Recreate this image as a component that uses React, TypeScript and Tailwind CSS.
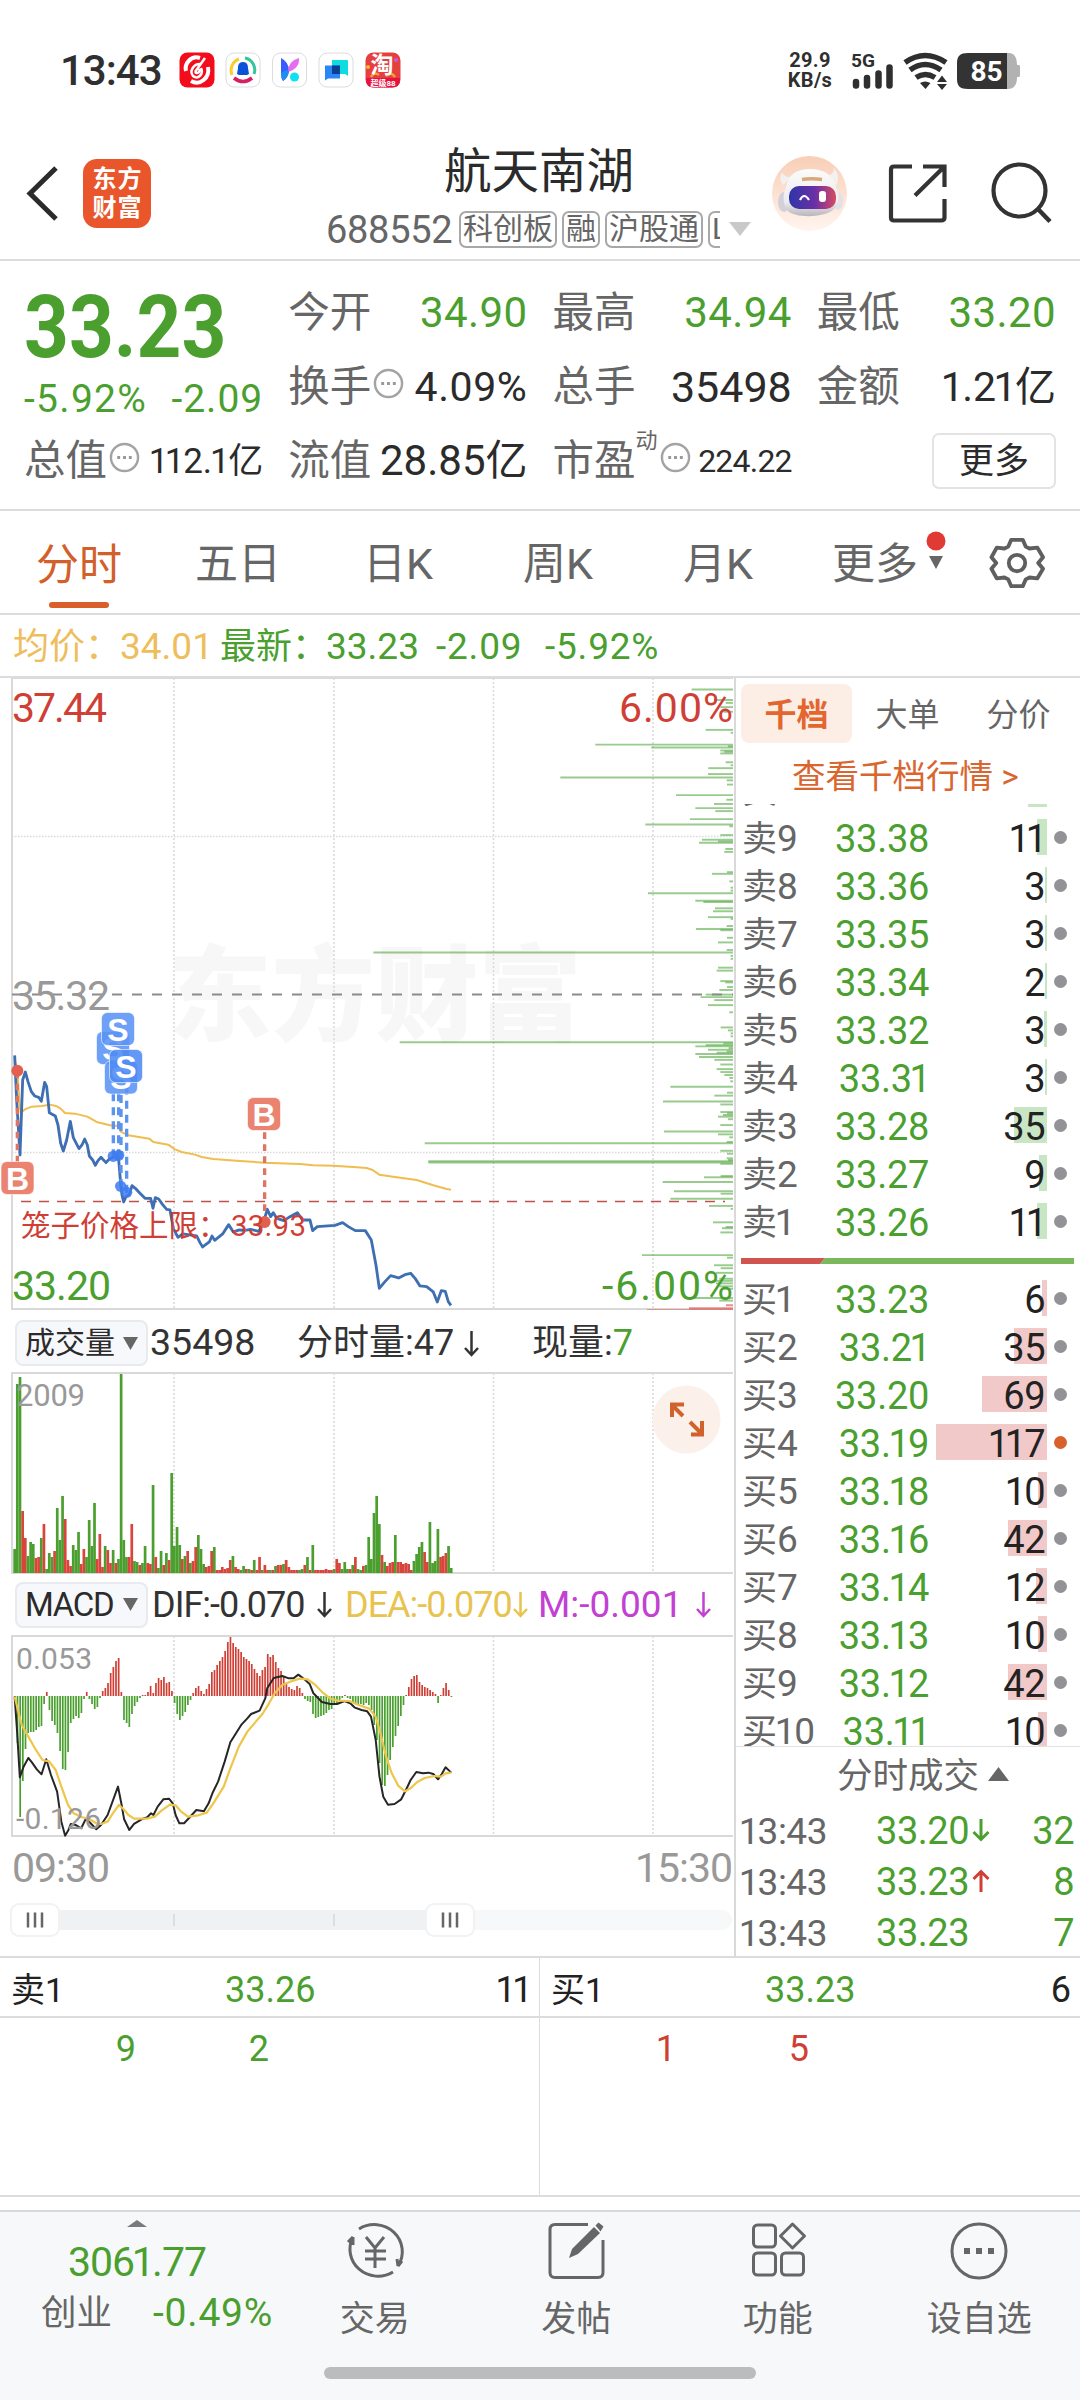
import React from "react";

const GREEN = "#4a9f2f";
const RED = "#cf3f36";

// minute volume, negative = falling minute
const volumes = [
  -24, -189, -196, 62, 35, -17, -31, -29, 15, 16, -35, 49, -4, -20, -16, 22, -65, -33, -77, 54, 13, 7, -28, -23, -41,
  9, 24, -16, -53, -27, -70, 14, 39, 6, -27, 23, 10, -23, 10, -14, -199, -33, -16, 16, 49, -12, -11, 8, -10, -27, 10,
  9, -88, 16, -5, -22, 8, -20, 13, -100, -27, -46, -28, 14, -17, 22, -10, 12, 26, -38, -24, -9, 6, 7, 22, -26, 3, 3,
  6, 4, 5, 13, -17, 6, 4, -3, -7, 4, -4, 3, -13, 3, 16, -3, 8, 3, -3, 3, -7, 8, 8, -9, 13, 6, 3, 3, 3, -3, -4, 8,
  -16, 3, -28, 3, 3, 3, 3, 4, 3, 3, -4, 14, 10, -4, -11, -4, 4, -8, 16, -4, -3, 7, -8, -36, -14, -60, -77, -49, 18,
  -11, 7, 10, 11, -38, 11, 11, 9, 10, 9, 3, -12, -19, -26, -31, 21, 11, -51, -10, -12, -44, 16, 17, 20, -27, -5,
];

const macd = [
  -2, -47, -121, -85, -53, -37, -36, -36, -34, -31, -30, -8, 4, -14, -25, -29, -37, -55, -73, -74, -56, -27, -23, -20,
  -22, -17, -3, 4, -3, -8, -13, -11, -2, 5, 8, 13, 23, 29, 35, 38, 4, -24, -27, -31, -18, -10, -6, -2, 1, 1, 4, 10, 3,
  13, 18, 16, 19, 13, 14, 5, -7, -18, -24, -20, -16, -9, -4, 3, 8, 10, 5, 2, 7, 12, 24, 26, 31, 35, 39, 45, 54, 59,
  53, 49, 47, 44, 39, 37, 35, 32, 27, 23, 20, 26, 29, 42, 39, 41, 34, 28, 25, 19, 13, 9, 7, 6, 10, 8, 3, -3, -5, -6,
  -18, -22, -21, -20, -19, -17, -14, -13, -8, -7, -5, -2, 1, -2, -3, -6, -7, -9, -8, -9, -7, -9, -14, -29, -44, -67,
  -89, -90, -79, -64, -51, -40, -30, -20, -9, 1, 9, 17, 20, 21, 14, 11, 9, 8, 6, 4, 2, -7, 1, 8, 13, 6, -1,
];

// resting orders: [left edge, y] in the depth layer's own units
const depth = [
  [695, 70], [762, 95], [797, 102], [781, 112], [790, 123], [737, 166], [812, 173], [406, 201], [574, 208], [804, 205],
  [781, 215], [793, 218], [781, 222], [797, 243], [812, 250], [745, 257], [744, 271], [301, 279], [800, 286],
  [801, 296], [648, 321], [799, 332], [762, 342], [706, 352], [766, 359], [690, 378], [556, 391], [808, 395],
  [781, 416], [726, 427], [774, 431], [717, 434], [796, 449], [793, 456], [801, 504], [756, 508], [808, 526],
  [812, 541], [812, 548], [564, 554], [706, 572], [730, 575], [765, 590], [759, 597], [744, 611], [812, 615],
  [800, 632], [708, 639], [781, 642], [801, 660], [774, 671], [800, 689], [-260, 695], [812, 703], [812, 710],
  [774, 731], [770, 738], [781, 763], [796, 766], [801, 777], [778, 784], [737, 795], [722, 801], [763, 808],
  [744, 820], [808, 837], [782, 873], [804, 880], [812, 887], [812, 894], [-181, 908], [790, 911], [737, 915],
  [706, 918], [806, 922], [744, 926], [800, 930], [770, 933], [706, 936], [717, 943], [763, 950], [781, 961],
  [770, 972], [781, 979], [793, 986], [808, 993], [811, 1001], [631, 1014], [801, 1028], [763, 1035], [609, 1049],
  [781, 1056], [781, 1074], [801, 1077], [789, 1081], [774, 1085], [804, 1091], [781, 1105], [612, 1120],
  [774, 1127], [808, 1134], [-106, 1148], [800, 1145], [781, 1166], [801, 1173], [-95, 1191], [-95, 1194],
  [800, 1184], [804, 1188], [781, 1197], [732, 1229], [782, 1226], [608, 1240], [642, 1262], [782, 1268],
  [631, 1280], [747, 1297], [812, 1304], [759, 1336], [797, 1347], [786, 1350], [781, 1360], [546, 1414],
  [801, 1420], [762, 1438], [782, 1445], [768, 1456], [778, 1470], [757, 1475], [768, 1481], [778, 1488], [786, 1494],
  [700, 1516], [778, 1522],
];

const sells = [
  ["10", "33.39", "20", 19],
  ["9", "33.38", "11", 10],
  ["8", "33.36", "3", 2],
  ["7", "33.35", "3", 2],
  ["6", "33.34", "2", 2],
  ["5", "33.32", "3", 3],
  ["4", "33.31", "3", 2],
  ["3", "33.28", "35", 33],
  ["2", "33.27", "9", 8],
  ["1", "33.26", "11", 10],
] as const;

const buys = [
  ["1", "33.23", "6", 5],
  ["2", "33.21", "35", 33],
  ["3", "33.20", "69", 65],
  ["4", "33.19", "117", 111],
  ["5", "33.18", "10", 9],
  ["6", "33.16", "42", 39],
  ["7", "33.14", "12", 11],
  ["8", "33.13", "10", 9],
  ["9", "33.12", "42", 39],
  ["10", "33.11", "10", 9],
] as const;

// digits with a narrower "1"
const Num = ({ value }: { value: string }) => (
  <>
    {value.split(/(1)/).map((part, i) =>
      part === "1" ? (
        <span key={i} className="-ml-[0.06em] -mr-[0.04em]">
          1
        </span>
      ) : (
        part
      )
    )}
  </>
);

const StatusBar = () => (
  <div className="flex h-[140px] items-center pl-[60px] pr-[60px] text-[#2f2f2f]">
    <div className="mt-[2px] w-[119px] text-[42px] font-medium leading-none tracking-[-1px]">13:43</div>
    <svg className="h-[36px] w-[222px]" viewBox="0 0 222 36">
      <rect x="0.5" y="0.5" width="35" height="35" rx="8" fill="#f30d1c" />
      <path d="M21 6C12 3 5 12 7 19M12 29c9 5 19-3 17-14" fill="none" stroke="#fff" strokeWidth="4" />
      <path d="M26 6 16 20M22 12c-7-1-12 7-8 12 5 4 11-2 8-8M16 20a2.500 2.500 0 1 0 4-3" fill="none" stroke="#fff" strokeWidth="2.500" />
      <g fill="#fff" stroke="#dcdcdc">
        <rect x="47" y="1" width="34" height="34" rx="8" />
        <rect x="93.500" y="1" width="34" height="34" rx="8" />
        <rect x="140" y="1" width="34" height="34" rx="8" />
      </g>
      <path d="M53 23a12 12 0 0 1 7-16" fill="none" stroke="#f8cf2c" strokeWidth="3" />
      <path d="M66 6a12 12 0 0 1 9 16" fill="none" stroke="#35c59d" strokeWidth="3" />
      <path d="M55 26q9 7 18 0" fill="none" stroke="#d81e62" strokeWidth="3.500" />
      <path d="M64 10c4 0 5 3 5 6l1 6-2 1h-8l-2-1 1-6c0-3 1-6 5-6" fill="#0a52d8" />
      <path d="M102 6q8 4 8 13-1 7-6 10-2-3-2-8z" fill="#3a5cff" />
      <path d="M120 6q1 10-11 14 0-11 11-14" fill="#e56bf0" />
      <path d="M104 29q5-3 6-10-3-2-8 2 0 5 2 8" fill="#1f8cf5" />
      <circle cx="115.500" cy="25" r="4.500" fill="#12dff0" />
      <path d="M153 8h15q1 0 1 1v15l-3-2h-13z" fill="#0fdce0" />
      <path d="M146 13.500h15v13h-12l-3 2z" fill="#2a86f5" />
      <path d="M153 13.500h8V22h-8z" fill="#0a3f92" />
      <rect x="186.500" y="0.500" width="35" height="35" rx="8" fill="#e5403f" />
      <path d="M187 26h34v2q0 7.500-8 7.500h-18q-8 0-8-7.500z" fill="#e8123f" />
      <circle cx="189" cy="15" r="2" fill="#f5b52e" />
      <circle cx="217" cy="8" r="2" fill="#c55be0" />
      <path d="M192 25q3-6 8-2M207 24q5-5 9 1" stroke="#f5a03c" strokeWidth="2.500" fill="none" />
      <text x="203" y="21" textAnchor="middle" fontSize="23" fontWeight="700" fill="#fff">淘</text>
      <text x="204" y="34" textAnchor="middle" fontSize="8" fontWeight="700" fill="#fff">超级88</text>
    </svg>
    <div className="ml-auto flex items-center">
      <div className="mr-[8px] w-[56px] text-center text-[20px] font-bold leading-[20px] tracking-[0.3px]">
        29.9
        <br />
        KB/s
      </div>
      <svg className="h-[40px] w-[174px]" viewBox="846 50 174 40">
        <text x="851" y="67" fontSize="18" fontWeight="700" fill="#2f2f2f" textLength="24" lengthAdjust="spacingAndGlyphs">5G</text>
        <g stroke="#2f2f2f" strokeWidth="6.500" strokeLinecap="round">
          <path d="M856 82v3.500M867 78v7.500M878.500 73.500v12M889.500 67.500v18" />
        </g>
        <g fill="none" stroke="#2f2f2f" strokeWidth="5.500">
          <path d="M905 62.500q20-14 41 0M910 70q15-11 31 0M916 77.500q9-6 19 0" />
        </g>
        <path d="M920 83q5-3 10.500 0l-5 6zM937 82l5-6.500 5 6.500zM937 84l5 6 5-6z" fill="#2f2f2f" />
        <path d="M1005 53h4c5 0 8 4 8 12h2q1 0 1 2v8q0 2-1 2h-2c0 8-3 12-9 12h-3z" fill="#b2b2b2" />
        <path d="M968 53h39v36h-39c-8 0-11-3-11-10V63c0-7 3-10 11-10" fill="#333" />
        <text x="986.500" y="81" textAnchor="middle" fontSize="28" fontWeight="700" fill="#fff">85</text>
      </svg>
    </div>
  </div>
);

const Tag = ({ children }: { children: React.ReactNode }) => (
  <div className="flex h-[37px] shrink-0 items-center rounded-[7px] border-2 border-[#a8a8a8] px-[2px] text-[30px] leading-none text-[#666]">
    {children}
  </div>
);

const Header = () => (
  <div className="flex h-[121px] items-start border-b-2 border-[#dcdcdc]">
    <svg className="ml-[24px] mt-[24px] h-[60px] w-[38px]" viewBox="0 0 38 60">
      <path d="M32 4 6 29.500 32 55" fill="none" stroke="#2b2b2b" strokeWidth="5" />
    </svg>
    <div className="ml-[21px] mt-[19px] grid h-[69px] w-[68px] grid-cols-2 place-content-center rounded-[14px] bg-[#e9562b] px-[9px] text-center text-[24px] font-bold leading-[29px] text-white">
      <span>东</span>
      <span>方</span>
      <span>财</span>
      <span>富</span>
    </div>
    <div className="ml-[176px] flex w-[426px] flex-col">
      <div className="mt-[7px] h-[50px] pl-[117px] text-[47.5px] leading-[50px] text-[#2b2b2b]">航天南湖</div>
      <div className="mt-[12px] flex items-center">
        <div className="-ml-[1px] mt-[2px] w-[133px] text-[38px] leading-none tracking-[-0.3px] text-[#666]">688552</div>
        <div className="flex w-[261px] gap-[5px] overflow-hidden">
          <Tag>科创板</Tag>
          <Tag>融</Tag>
          <Tag>沪股通</Tag>
          <Tag>L</Tag>
        </div>
        <svg className="ml-[9px] h-[16px] w-[23px]" viewBox="0 0 23 16">
          <path d="M0 1h22L11 15z" fill="#c9c9c9" />
        </svg>
      </div>
    </div>
    <svg className="ml-[18px] mt-[15px] h-[77px] w-[76px]" viewBox="770 155 76 77">
      <defs>
        <linearGradient id="peach" x1="0" y1="0" x2="0" y2="1">
          <stop offset="0" stopColor="#f8ceb6" />
          <stop offset="1" stopColor="#fff5ef" />
        </linearGradient>
        <linearGradient id="visor" x1="0" y1="0" x2="1" y2="0">
          <stop offset="0" stopColor="#2f35a8" />
          <stop offset="0.55" stopColor="#6a2fa6" />
          <stop offset="1" stopColor="#d84a62" />
        </linearGradient>
        <linearGradient id="shell" x1="0" y1="0" x2="0" y2="1">
          <stop offset="0" stopColor="#fbfbfb" />
          <stop offset="0.7" stopColor="#ececef" />
          <stop offset="1" stopColor="#b9b6bb" />
        </linearGradient>
      </defs>
      <circle cx="808.500" cy="193.500" r="37.500" fill="url(#peach)" />
      <path d="M782 185q-5-5-1-13 2 6 10 5M828 175q5-1 5-7 7 7 2 18" fill="#f3f0f0" />
      <ellipse cx="783" cy="202" rx="6" ry="10" fill="#d2d0d8" />
      <ellipse cx="837" cy="201" rx="5" ry="9" fill="#e3e1e6" />
      <path d="M785 187c2-12 10-18 24-18s23 6 26 18c4 10 3 18-3 23-10 8-38 8-45 1-5-5-6-15-2-24" fill="url(#shell)" />
      <rect x="788" y="186" width="47" height="23" rx="10" fill="url(#visor)" />
      <path d="M799 200q4-8 9 0" fill="none" stroke="#fff" strokeWidth="2.200" />
      <rect x="818" y="191" width="7" height="11" rx="3" fill="#fff" />
      <path d="M801 179.500q9-1.500 20 0" stroke="#d8a878" strokeWidth="3.500" fill="none" />
    </svg>
    <svg className="ml-[40px] mt-[22px] h-[62px] w-[62px]" viewBox="886 162 62 62">
      <path
        d="M911 166.500h-18q-3 0-3 3v48q0 3 3 3h47q3.500 0 3.500-3V199M922 166.500h21.500V187M943 167l-29 28.500"
        fill="none"
        stroke="#333"
        strokeWidth="4.2"
      />
    </svg>
    <svg className="ml-[41px] mt-[21px] h-[64px] w-[64px]" viewBox="989 161 64 64">
      <circle cx="1018.500" cy="190.500" r="26" fill="none" stroke="#333" strokeWidth="4.200" />
      <path d="m1036.500 208.500 12.500 13" stroke="#333" strokeWidth="4.500" />
    </svg>
  </div>
);

const Dots = () => (
  <svg className="mb-[8px] ml-[2px] h-[31px] w-[31px] shrink-0" viewBox="0 0 32 32">
    <circle cx="16" cy="16" r="14" fill="none" stroke="#a3a3a3" strokeWidth="2.500" />
    <path d="M8.500 16h3M14.500 16h3M20.500 16h3" stroke="#999" strokeWidth="3" />
  </svg>
);

type CellProps = { label: string; value: string; tone?: string; dots?: boolean; size?: string; sup?: string };

const Cell = ({ label, value, tone = "text-[#2b2b2b]", dots, size = "text-[42px] tracking-[0.4px]", sup }: CellProps) => (
  <div className="flex h-[74px] items-center whitespace-nowrap leading-none">
    <span className="text-[41.5px] text-[#666]">{label}</span>
    {sup && <span className="mb-[40px] text-[22px] text-[#666]">{sup}</span>}
    {dots && <Dots />}
    <span className={`ml-auto ${size} ${tone}`}>
      <Num value={value} />
    </span>
  </div>
);

const Quote = () => (
  <div className="grid h-[250px] grid-cols-4 content-start gap-x-[25px] border-b-2 border-[#dcdcdc] px-6 pt-[15px]">
    <div className="row-span-2 h-[148px] leading-none text-[#4a9f2f]">
      <div className="h-[104px] origin-left scale-x-[0.89] text-[88px] font-bold leading-[102px]">33.23</div>
      <div className="flex justify-between text-[39px]">
        <span className="tracking-[1.3px]">-5.92%</span>
        <span className="tracking-[1px]">-2.09</span>
      </div>
    </div>
    <Cell label="今开" value="34.90" tone="text-[#4a9f2f]" />
    <Cell label="最高" value="34.94" tone="text-[#4a9f2f]" />
    <Cell label="最低" value="33.20" tone="text-[#4a9f2f]" />
    <Cell label="换手" value="4.09%" dots size="text-[41px] tracking-[0.6px]" />
    <Cell label="总手" value="35498" size="text-[43px]" />
    <Cell label="金额" value="1.21亿" size="text-[41px]" />
    <Cell label="总值" value="112.1亿" dots size="text-[35px]" />
    <Cell label="流值" value="28.85亿" size="text-[42px]" />
    <Cell label="市盈" value="224.22" dots sup="动" size="text-[32px] tracking-[-0.8px]" />
    <div className="flex h-[74px] items-center justify-end">
      <div className="flex h-[56px] w-[124px] items-center justify-center rounded-[7px] border-2 border-[#e3e3e3] text-[35px] leading-none text-[#2b2b2b]">
        更多
      </div>
    </div>
  </div>
);

const Tabs = () => (
  <div className="flex h-[104px] items-center border-b-2 border-[#dcdcdc] text-[43px] leading-none text-[#666]">
    <div className="flex w-[158px] flex-col items-center pt-[27px] text-[#d2602a]">
      <span>分时</span>
      <div className="mt-[15px] h-[6px] w-[60px] rounded-full bg-[#d9602a]" />
    </div>
    <div className="w-[160px] pt-[5px] text-center">五日</div>
    <div className="w-[160px] pt-[5px] text-center">日K</div>
    <div className="w-[160px] pt-[5px] text-center">周K</div>
    <div className="w-[160px] pt-[5px] text-center">月K</div>
    <div className="ml-[34px] pt-[5px]">更多</div>
    <svg className="ml-[7px] h-[64px] w-[22px]" viewBox="926 530 22 64">
      <circle cx="937" cy="541" r="9.500" fill="#df3b34" />
      <path d="M930 556h14l-7 13z" fill="#666" />
    </svg>
    <svg className="ml-[42px] mt-[2px] h-[54px] w-[56px]" viewBox="0 0 56 56" fill="none" stroke="#5f5f5f" strokeWidth="4" strokeLinejoin="round">
      <path d="M22 4h12l3 7 4 2 8-1 6 10-5 6 5 6-6 10-8-1-4 2-3 7H22l-3-7-4-2-8 1L1.500 34l5-6-5-6L7 12l8 1 4-2z" />
      <circle cx="28" cy="28" r="8.500" />
    </svg>
  </div>
);

const Legend = () => (
  <div className="flex h-[63px] items-center whitespace-nowrap border-b-2 border-[#dcdcdc] pl-[13px] pt-[2px] text-[37px] leading-none text-[#4a9f2f]">
    <span className="w-[107px] text-[36px] text-[#eebd5c]">均价：</span>
    <span className="w-[100px] text-[#eebd5c]">34.01</span>
    <span className="w-[106px] text-[36px]">最新：</span>
    <span className="w-[110px]">33.23</span>
    <span className="w-[109px] tracking-[0.8px]">-2.09</span>
    <span className="tracking-[0.8px]">-5.92%</span>
  </div>
);

const Grid = ({ top, bottom }: { top: number; bottom: number }) => (
  <g>
    {[174, 334, 493.5, 653].map((x) => (
      <line key={x} x1={x} x2={x} y1={top} y2={bottom} stroke="#d9d9d9" strokeWidth="1.5" strokeDasharray="2 2" />
    ))}
    <path d={`M733 ${top}H12V${bottom}H733`} fill="none" stroke="#d9d9d9" strokeWidth="2" />
  </g>
);

const Mark = ({ x, y, label, color }: { x: number; y: number; label: string; color: string }) => (
  <g>
    <rect x={x - 16.5} y={y - 16.5} width="33" height="33" rx="6" fill={color} stroke="#fff" strokeOpacity="0.6" />
    <text x={x} y={y + 11.5} textAnchor="middle" fontSize="32" fontWeight="600" fill="#fff" className="font-['Liberation_Sans']">
      {label}
    </text>
  </g>
);

const PriceChart = () => (
  <svg className="h-[632px] w-[734px]" viewBox="0 678 734 632">
    <text x="168" y="1033" fontSize="104" fontWeight="900" fill="#f7f7f7" textLength="414" lengthAdjust="spacingAndGlyphs">
      东方财富
    </text>
    <Grid top={678} bottom={1309} />
    <path d="M12 836.500H733M12 1152.500H733" stroke="#d9d9d9" strokeWidth="1.500" strokeDasharray="1.500 1.500" />
    <g transform="translate(460 660) scale(0.3333 0.4209)" stroke="#55a943" strokeOpacity="0.6">
      {depth.map(([x, y], i) => (
        <line key={i} x1={x} x2="819" y1={y} y2={y} strokeWidth="4.6" />
      ))}
      <path d="M798 1533H819M687 1540H819M561 1545H819" stroke="#d6453f" strokeWidth="5" />
    </g>
    <path d="M12 994.500H733" stroke="#8c8c8c" strokeWidth="2" strokeDasharray="10 10" />
    <path d="M21 1201.500H725" stroke="#c0504a" strokeWidth="1.500" strokeDasharray="10 8" />
    <g transform="translate(0 900) scale(0.3333)" fill="none" strokeLinejoin="round">
      <path
        d="M44 480 52 510 58 600 62 640 75 628 95 620 125 618 150 614 168 618 182 626 195 639 225 641 262 650 290 666 330 676 356 678 362 695 385 706 448 716 460 726 505 734 525 748 545 756 585 764 605 771 640 777 720 783 792 788 900 792 940 796 1000 797 1060 801 1100 804 1118 810 1138 824 1190 832 1250 840 1300 856 1340 867 1353 869"
        stroke="#efbd50"
        strokeWidth="6"
      />
      <path
        d="M44 466 50 600 60 765 68 540 76 516 84 545 94 575 104 588 116 592 124 604 134 547 140 560 148 638 166 648 174 675 182 730 190 753 200 720 211 664 220 713 237 746 246 735 254 717 262 735 268 768 278 780 286 796 294 782 303 772 318 788 328 777 340 772 355 766 362 850 366 885 371 906 378 890 388 884 396 857 406 865 420 880 435 895 452 895 459 925 466 893 476 897 488 914 500 928 510 930 520 985 534 1012 548 1002 590 1008 600 1028 608 1041 628 1026 636 1008 644 1021 668 1002 686 974 700 996 718 990 735 991 752 988 776 994 788 975 802 928 812 950 820 938 830 955 852 962 870 950 892 938 908 960 930 960 938 992 952 980 1005 976 1028 968 1045 980 1066 992 1096 992 1114 1020 1128 1095 1138 1165 1155 1145 1172 1127 1196 1134 1215 1124 1232 1120 1246 1136 1260 1158 1280 1160 1300 1176 1312 1206 1324 1172 1336 1174 1345 1205 1353 1216"
        stroke="#3f6fb3"
        strokeWidth="8.5"
      />
      <path d="M340 580V770M356 580V766M363 585V860M380 560V880" stroke="#5b93f0" strokeWidth="10" strokeDasharray="24 18" />
      <path d="M52 515V790M794 697V965" stroke="#e07464" strokeWidth="10" strokeDasharray="20 16" />
      <g stroke="none" fill="#3d7cf0" fillOpacity="0.85">
        <circle cx="340" cy="769" r="17" />
        <circle cx="356" cy="766" r="17" />
        <circle cx="362" cy="859" r="17" />
        <circle cx="380" cy="877" r="17" />
      </g>
      <g stroke="none" fill="#e2604e">
        <circle cx="52" cy="512" r="18" />
        <circle cx="794" cy="966" r="18" />
      </g>
    </g>
    <Mark x={17.500} y={1178} label="B" color="#ea8370" />
    <Mark x={264} y={1114} label="B" color="#ea8370" />
    <Mark x={113} y={1048} label="S" color="#5b93f6e0" />
    <Mark x={121} y={1077.500} label="S" color="#5b93f6e0" />
    <Mark x={118} y={1029} label="S" color="#5b93f6e0" />
    <Mark x={126} y={1066} label="S" color="#4f8af5e0" />
    <g fontSize="41">
      <text x="12" y="722" fill={RED} textLength="95">37.44</text>
      <text x="733" y="722" fill={RED} textAnchor="end" textLength="114">6.00%</text>
      <text x="12" y="1010" fill="#999" textLength="98">35.32</text>
      <text x="12" y="1300" fill={GREEN} textLength="99">33.20</text>
      <text x="733" y="1300" fill={GREEN} textAnchor="end" textLength="131">-6.00%</text>
    </g>
    <text x="21" y="1236" fontSize="29.500" fill={RED}>
      笼子价格上限：<tspan x="231" textLength="75">33.93</tspan>
    </text>
  </svg>
);

const Picker = ({ name, size }: { name: string; size: string }) => (
  <div className="flex h-[46px] w-[133px] shrink-0 items-center justify-between rounded-[8px] border-2 border-[#e8eaee] bg-[#f7f8fb] pl-[8px] pr-[8px]">
    <span className={`whitespace-nowrap leading-none text-[#2b2b2b] ${size}`}>{name}</span>
    <svg className="h-[13px] w-[15px] shrink-0" viewBox="0 0 15 13">
      <path d="M0 0h15L7.500 13z" fill="#666" />
    </svg>
  </div>
);

const Down = () => (
  <svg className="h-[27px] w-[15px] shrink-0" viewBox="0 0 15 27" fill="none" stroke="currentColor" strokeWidth="2.500">
    <path d="M7.500 1v24M1 18l6.500 7 6.500-7" />
  </svg>
);

const VolumeHead = () => (
  <div className="flex h-[62px] items-center whitespace-nowrap pl-[15px] pt-[4px] text-[36px] leading-none text-[#333]">
    <Picker name="成交量" size="text-[30px]" />
    <span className="ml-[2px] w-[147px] text-[37.500px]">35498</span>
    <span className="flex w-[235px] items-center">
      分时量:47
      <span className="ml-[10px] flex">
        <Down />
      </span>
    </span>
    <span>
      现量:<span className="text-[#4a9f2f]">7</span>
    </span>
  </div>
);

const VolumeChart = () => (
  <svg className="h-[202px] w-[734px]" viewBox="0 1372 734 202">
    <Grid top={1373} bottom={1573} />
    {volumes.map((v, i) => (
      <rect key={i} x={13.3 + i * 2.662} y={1573 - Math.abs(v)} width="2.7" height={Math.abs(v)} fill={v < 0 ? GREEN : "#d8453a"} />
    ))}
    <text x="16" y="1406" fontSize="31" fill="#999" textLength="69">2009</text>
    <circle cx="686.500" cy="1419.500" r="34" fill="#fbf0ea" />
    <path d="M684 1404.500H672V1417M672 1405l11 11M691 1434.500h11V1421M702 1434l-12-12" fill="none" stroke="#d2622c" strokeWidth="4" />
  </svg>
);

const MacdHead = () => (
  <div className="flex h-[61px] items-center whitespace-nowrap pl-[15px] text-[36px] leading-none text-[#333]">
    <Picker name="MACD" size="text-[33px] tracking-[-1.300px]" />
    <span className="ml-[4px] flex w-[193px] items-center justify-between pr-[13px] tracking-[-1px]">
      DIF:-0.070
      <Down />
    </span>
    <span className="flex w-[193px] items-center justify-between pr-[10px] tracking-[-1px] text-[#e9c34f]">
      DEA:-0.070
      <Down />
    </span>
    <span className="flex w-[173px] items-center justify-between text-[37px] text-[#c240d2]">
      M:-0.001
      <Down />
    </span>
  </div>
);

const MacdChart = () => (
  <svg className="h-[202px] w-[734px]" viewBox="0 1635 734 202">
    <Grid top={1636} bottom={1836} />
    {macd.map((v, i) => (
      <rect key={i} x={14 + i * 2.662} y={v < 0 ? 1696 : 1696 - v} width="1.7" height={Math.abs(v)} fill={v < 0 ? GREEN : RED} />
    ))}
    <g transform="translate(0 1570) scale(0.472 0.3333)" fill="none" strokeLinejoin="round">
      <path
        d="M31 380 36 480 42 622 50 590 60 564 68 578 78 598 88 613 98 568 108 615 121 665 130 755 138 797 145 780 150 762 160 765 172 775 182 746 192 760 204 778 214 765 228 735 250 650 257 700 263 748 274 780 284 762 300 748 312 742 320 730 325 735 334 710 346 688 358 686 366 700 372 735 380 760 390 760 400 745 416 720 432 724 442 700 450 670 462 635 476 575 488 517 500 490 512 463 524 445 532 432 550 422 562 385 566 355 580 324 598 318 612 325 622 325 632 314 645 328 656 342 664 370 682 396 700 402 714 402 730 393 742 400 752 413 766 420 778 424 786 440 796 510 804 620 812 680 822 704 836 702 850 688 860 660 870 630 882 606 896 610 908 608 918 612 928 628 936 612 944 592 956 608"
        stroke="#262626"
        strokeWidth="2"
        vectorEffect="non-scaling-stroke"
      />
      <path
        d="M31 380 38 420 46 465 60 500 74 535 90 570 104 574 118 600 130 650 144 705 156 730 174 742 190 748 204 760 214 762 228 755 240 728 252 705 262 718 272 735 284 746 312 746 328 740 342 722 360 704 372 706 384 725 398 740 420 736 438 728 452 700 474 650 488 595 506 530 524 485 542 455 556 432 570 400 582 370 598 345 615 335 635 326 652 328 668 345 684 368 700 386 716 392 740 393 760 405 782 416 796 440 806 490 818 560 830 610 844 648 858 664 870 655 884 636 900 624 920 618 934 620 944 610 956 608"
        stroke="#edc64a"
        strokeWidth="2.200"
        vectorEffect="non-scaling-stroke"
      />
    </g>
    <g fontSize="30" fill="#999">
      <text x="16" y="1669" textLength="76">0.053</text>
      <text x="16" y="1829" textLength="85">-0.126</text>
    </g>
  </svg>
);

const Thumb = () => (
  <svg className="h-[40px] w-[56px]" viewBox="0 0 56 40">
    <rect x="3" y="3" width="50" height="34" rx="9" fill="#f2f2f4" />
    <rect x="5" y="5" width="46" height="30" rx="7" fill="#fff" />
    <path d="M21 12.500v15M28 12.500v15M35 12.500v15" stroke="#666" strokeWidth="2.500" />
  </svg>
);

const Slider = () => (
  <div className="relative ml-[12px] mt-[18px] flex h-[20px] w-[720px] rounded-full bg-[#f7f8fa]">
    <div className="flex h-[20px] w-[438px] items-center bg-[#f0f1f3]">
      <div className="ml-[161px] h-[12px] w-[2px] bg-[#dcdde0]" />
      <div className="ml-[158px] h-[12px] w-[2px] bg-[#dcdde0]" />
    </div>
    <div className="absolute -left-[5px] -top-[10px]">
      <Thumb />
    </div>
    <div className="absolute -top-[10px] left-[410px]">
      <Thumb />
    </div>
  </div>
);

type RowProps = { side: string; row: readonly [string, string, string, number]; bar: string };

const BookRow = ({ side, row: [level, price, qty, width], bar }: RowProps) => (
  <div className="flex h-[48px] shrink-0 items-center text-[38px] leading-none">
    <span className="w-[90px] whitespace-nowrap pt-[3px] text-[35px] text-[#666]">
      {side}
      <span className="text-[37px]">
        <Num value={level} />
      </span>
    </span>
    <span className="w-[97px] pt-[3px] text-right tracking-[-0.3px] text-[#4a9f2f]">
      <Num value={price} />
    </span>
    <div className="relative flex h-[36px] w-[118px] items-center justify-end pr-[2px]">
      <div className={`absolute right-0 top-0 h-full ${bar}`} style={{ width }} />
      <span className="relative pt-[3px] tracking-[-0.5px] text-[#222]">
        <Num value={qty} />
      </span>
    </div>
    <div className={`ml-[7px] h-[13px] w-[13px] rounded-full ${qty === "117" ? "bg-[#d9622b]" : "bg-[#929297]"}`} />
  </div>
);

const ticks = [
  ["33.20", "down", "32"],
  ["33.23", "up", "8"],
  ["33.23", "", "7"],
];

const OrderBook = () => (
  <div className="flex h-[1279px] w-[346px] flex-col border-l-2 border-[#d9d9d9]">
    <div className="ml-[5px] mt-[6px] flex h-[59px] text-[32px] leading-[63px] text-[#666]">
      <div className="w-[111px] rounded-[8px] bg-[#fceee5] text-center font-bold text-[#e2662e]">千档</div>
      <div className="w-[111px] text-center">大单</div>
      <div className="w-[111px] text-center">分价</div>
    </div>
    <div className="h-[61px] pl-[56px] text-[33.500px] leading-[67px] text-[#d9652f]">查看千档行情 &gt;</div>
    <div className="flex h-[441px] flex-col justify-end overflow-hidden pl-[6px]">
      {sells.map((r) => (
        <BookRow key={r[0]} side="卖" row={r} bar="bg-[#c9e6c4]" />
      ))}
    </div>
    <svg className="ml-[5px] mt-[13px] h-[6px] w-[333px] shrink-0" viewBox="0 0 333 6">
      <path d="M0 0h84l-5 6H0z" fill="#d0554f" />
      <path d="M84 0h249v6H79z" fill="#79b95c" />
    </svg>
    <div className="mt-[10px] h-[473px] overflow-hidden border-b border-[#e2e2e2] pl-[6px]">
      {buys.map((r) => (
        <BookRow key={r[0]} side="买" row={r} bar="bg-[#f1c9c9]" />
      ))}
    </div>
    <div className="flex h-[57px] items-center pl-[101px] pt-[3px] text-[35.500px] leading-none text-[#666]">
      分时成交
      <svg className="mb-[6px] ml-[9px] h-[14px] w-[21px]" viewBox="0 0 21 14">
        <path d="M10.500 0 21 14H0z" fill="#666" />
      </svg>
    </div>
    {ticks.map(([price, dir, qty], i) => (
      <div key={i} className="flex h-[51px] items-center pl-[5px] pt-[3px] text-[38px] leading-none tracking-[-0.5px] text-[#4a9f2f]">
        <span className="w-[98px] text-[37px] text-[#666]">
          <Num value="13:43" />
        </span>
        <span className="w-[130px] text-right">{price}</span>
        <svg className="mb-[2px] ml-[3px] h-[24px] w-[18px]" viewBox="0 0 18 24" fill="none" strokeWidth="3">
          {dir === "down" && <path d="M9 1v20M1.500 14 9 21.500l7.500-7.500" stroke={GREEN} />}
          {dir === "up" && <path d="M9 23V3M1.500 10 9 2.500l7.500 7.500" stroke={RED} />}
        </svg>
        <span className="ml-auto pr-[6px]">{qty}</span>
      </div>
    ))}
  </div>
);

type QueueProps = { name: string; price: string; total: string; orders: string[]; tone: string };

const Queue = ({ name, price, total, orders, tone }: QueueProps) => (
  <div className="h-[238px] w-[540px] leading-none">
    <div className="flex h-[60px] items-center border-b-2 border-[#dcdcdc] pl-[11px] pr-[9px] pt-[5px] text-[36px] text-[#222]">
      <span className="w-[214px] text-[34px]">{name}</span>
      <span className="text-[#4a9f2f]">{price}</span>
      <span className="ml-auto">
        <Num value={total} />
      </span>
    </div>
    <div className={`flex pt-[13px] text-[36px] ${tone}`}>
      {orders.map((o, i) => (
        <span key={i} className={i ? "w-[133px] text-right" : "w-[136px] text-right"}>
          {o}
        </span>
      ))}
    </div>
  </div>
);

const Action = ({ label, children }: { label: string; children: React.ReactNode }) => (
  <div className="flex w-[201.5px] flex-col items-center pt-[8px]">
    <svg className="h-[62px] w-[70px]" viewBox="0 0 70 62" fill="none" stroke="#666" strokeWidth="3">
      {children}
    </svg>
    <span className="mt-[20px] text-[35px] leading-none text-[#666]">{label}</span>
  </div>
);

const BottomBar = () => (
  <div className="h-[190px] border-t-2 border-[#d6d8dc] bg-[#f7f8fa]">
    <div className="flex h-[155px]">
      <div className="flex w-[274px] flex-col items-center leading-none text-[#4a9f2f]">
        <svg className="mt-[8px] h-[7px] w-[20px]" viewBox="0 0 20 7">
          <path d="M10 0 20 7H0z" fill="#7a7a7e" />
        </svg>
        <span className="mt-[15px] text-[41px] tracking-[-1px]">
          <Num value="3061.77" />
        </span>
        <div className="mt-[11px] flex w-[274px] items-center pl-[41px] text-[39px]">
          <span className="w-[112px] text-[35.500px] text-[#666]">创业</span>
          <span className="tracking-[0.8px]">-0.49%</span>
        </div>
      </div>
      <Action label="交易">
        <path d="M19 9a28 27 0 0 1 39 37l4-5M58 46l-1-7M53 52A28 27 0 0 1 13 17l-5 5M13 17v8" />
        <path d="m26 17 9 11 9-11M35 28v20M25 31h21M25 39h21" />
      </Action>
      <Action label="发帖">
        <path d="M47 4.500H14q-5 0-5 5v43q0 5 5 5h43q5 0 5-5V20" />
        <path d="m28 38 3-9 22-22 6 6-22 21z" fill="#666" stroke="none" />
        <path d="m54.500 5.500 3-3 5 4-3 5z" fill="#666" stroke="none" />
      </Action>
      <Action label="功能">
        <rect x="10.500" y="5" width="22" height="22" rx="4" />
        <rect x="10.500" y="33" width="22" height="22" rx="4" />
        <rect x="38.500" y="33" width="22" height="22" rx="4" />
        <path d="m49.500 4 12 12-12 12-12-12z" strokeLinejoin="round" />
      </Action>
      <Action label="设自选">
        <circle cx="35" cy="31" r="27" />
        <path d="M20 31h6M32 31h6M44 31h6" strokeWidth="6" />
      </Action>
    </div>
    <div className="mx-auto h-[12px] w-[432px] rounded-full bg-[#bbbcbe]" />
  </div>
);

const App = () => (
  <main className="flex h-[2400px] w-[1080px] flex-col overflow-hidden bg-white font-['Roboto','Noto_Sans_CJK_SC',sans-serif]">
    <StatusBar />
    <Header />
    <Quote />
    <Tabs />
    <Legend />
    <div className="flex h-[1280px] border-b-2 border-[#dcdcdc]">
      <div className="flex w-[734px] shrink-0 flex-col">
        <PriceChart />
        <VolumeHead />
        <VolumeChart />
        <MacdHead />
        <MacdChart />
        <div className="flex h-[55px] items-center justify-between pl-[12px] pr-[2px] pt-[8px] text-[41px] leading-none tracking-[-1px] text-[#999]">
          <span>09:30</span>
          <span>15:30</span>
        </div>
        <Slider />
      </div>
      <OrderBook />
    </div>
    <div className="flex h-[239px] border-b-2 border-[#dcdcdc]">
      <Queue name="卖1" price="33.26" total="11" orders={["9", "2"]} tone="text-[#4a9f2f]" />
      <div className="-ml-[1px] w-px bg-[#dcdcdc]" />
      <Queue name="买1" price="33.23" total="6" orders={["1", "5"]} tone="text-[#cf3f36]" />
    </div>
    <div className="h-[13px]" />
    <BottomBar />
  </main>
);

export default App;
